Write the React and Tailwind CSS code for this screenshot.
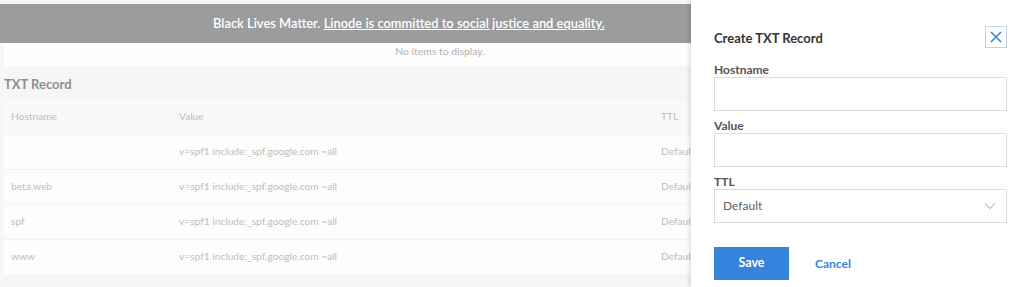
import React from "react";

const rows = [
  { host: "", value: "v=spf1 include:_spf.google.com ~all", ttl: "Default" },
  { host: "beta.web", value: "v=spf1 include:_spf.google.com ~all", ttl: "Default" },
  { host: "spf", value: "v=spf1 include:_spf.google.com ~all", ttl: "Default" },
  { host: "www", value: "v=spf1 include:_spf.google.com ~all", ttl: "Default" },
];

function Field({ label, children }) {
  return (
    <div className="flex flex-col">
      <label className="text-[12px] font-bold text-[#555] leading-[12px] mb-[1px]">{label}</label>
      {children}
    </div>
  );
}

export default function App() {
  return (
    <div className="relative w-[1024px] h-[287px] overflow-hidden bg-[#f6f6f6] font-['Lato',sans-serif]">
      {/* dimmed page behind the drawer */}
      <div className="flex flex-col pt-[4px]">
        <div className="h-[39px] bg-[#9b9c9e] flex items-center pl-[213px] text-[12.9px] font-semibold text-white">
          <span>
            Black Lives Matter.{" "}
            <span className="underline">Linode is committed to social justice and equality.</span>
          </span>
        </div>
        <div className="mx-[4px] h-[23px] bg-[#fefefe] flex items-start justify-center pt-[1px] text-[10.4px] text-[#b0b0b0] pr-[144px]">
          No items to display.
        </div>
        <div className="h-[34px] flex items-end pl-[4px] pb-[6px] text-[13px] font-bold text-[#8e8e8e]">
          TXT Record
        </div>
        <div className="mx-[4px] flex flex-col text-[10.2px] text-[#bdbdbd]">
          <div className="h-[34px] flex items-center bg-[#f9f9f9]">
            <div className="w-[175px] pl-[7px]">Hostname</div>
            <div className="w-[482px]">Value</div>
            <div>TTL</div>
          </div>
          {rows.map((r, i) => (
            <div key={i} className="h-[35px] flex items-center bg-[#fdfdfd] border-t border-[#f2f2f2]">
              <div className="w-[175px] pl-[7px]">{r.host}</div>
              <div className="w-[482px]">{r.value}</div>
              <div>{r.ttl}</div>
            </div>
          ))}
        </div>
      </div>

      {/* drawer */}
      <div className="absolute top-0 right-0 h-full w-[333px] bg-white shadow-[-2px_0_4px_rgba(0,0,0,0.12)] pl-[23px] pr-[17px] pt-[26px]">
        <div className="flex items-center justify-between h-[22px]">
          <h2 className="text-[13px] font-bold text-[#333] pt-[3px]">Create TXT Record</h2>
          <button className="w-[22px] h-[22px] border border-[#bcd4f0] flex items-center justify-center text-[#3683dc]">
            <svg width="12" height="12" viewBox="0 0 12 12" fill="none" stroke="currentColor" strokeWidth="1.6">
              <path d="M1 1 L11 11 M11 1 L1 11" />
            </svg>
          </button>
        </div>
        <div className="flex flex-col gap-[9px] mt-[16px]">
          <Field label="Hostname">
            <div className="h-[34px] border border-[#dcdcdc] bg-white" />
          </Field>
          <Field label="Value">
            <div className="h-[34px] border border-[#dcdcdc] bg-white" />
          </Field>
          <Field label="TTL">
            <div className="h-[34px] border border-[#dcdcdc] bg-white flex items-center justify-between pl-[8px] pr-[10px]">
              <span className="text-[12px] text-[#606060]">Default</span>
              <svg width="12" height="8" viewBox="0 0 12 8" fill="none" stroke="#c8c8c8" strokeWidth="1.4">
                <path d="M1 1.5 L6 6.5 L11 1.5" />
              </svg>
            </div>
          </Field>
        </div>
        <div className="flex items-center mt-[24px]">
          <button className="w-[75px] h-[33px] bg-[#3683dc] text-white text-[12.5px] font-bold">Save</button>
          <button className="ml-[26px] text-[#3683dc] text-[12px] font-bold">Cancel</button>
        </div>
      </div>
    </div>
  );
}
